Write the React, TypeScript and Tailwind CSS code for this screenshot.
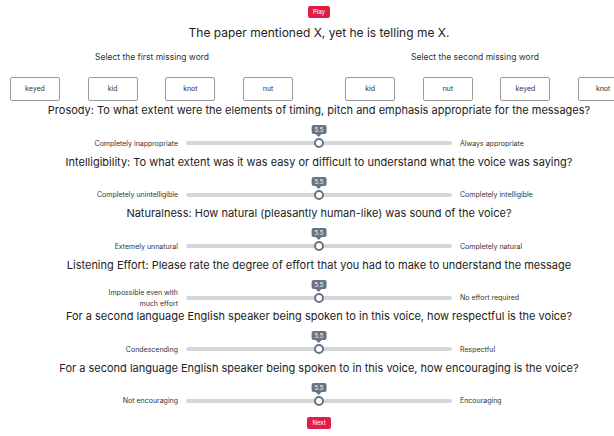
import React from "react";

const font = { fontFamily: "Inter, 'Noto Sans', sans-serif" };

type Q = { q: string; left: string; right: string };

const questions: Q[] = [
  {
    q: "Prosody: To what extent were the elements of timing, pitch and emphasis appropriate for the messages?",
    left: "Completely inappropriate",
    right: "Always appropriate",
  },
  {
    q: "Intelligibility: To what extent was it was easy or difficult to understand what the voice was saying?",
    left: "Completely unintelligible",
    right: "Completely intelligible",
  },
  {
    q: "Naturalness: How natural (pleasantly human-like) was sound of the voice?",
    left: "Extemely unnatural",
    right: "Completely natural",
  },
  {
    q: "Listening Effort: Please rate the degree of effort that you had to make to understand the message",
    left: "Impossible even with much effort",
    right: "No effort required",
  },
  {
    q: "For a second language English speaker being spoken to in this voice, how respectful is the voice?",
    left: "Condescending",
    right: "Respectful",
  },
  {
    q: "For a second language English speaker being spoken to in this voice, how encouraging is the voice?",
    left: "Not encouraging",
    right: "Encouraging",
  },
];

function WordButton({ w }: { w: string }) {
  return (
    <div className="w-[50px] h-[24px] shrink-0 border border-[#9a9a9a] rounded-[2px] flex items-center justify-center text-[7px] text-[#333] bg-white">
      {w}
    </div>
  );
}

function Slider({ left, right }: { left: string; right: string }) {
  return (
    <div className="flex items-center justify-center h-[12px]">
      <div className="w-[86px] text-right text-[7px] leading-[11px] text-[#333]">{left}</div>
      <div className="relative w-[266px] h-[10px] mx-[8px] flex items-center">
        <div className="w-full h-[4px] rounded-full bg-[#d4d6da]" />
        <div className="absolute left-1/2 -translate-x-1/2 top-0 w-[10px] h-[10px] rounded-full bg-white border-[2px] border-[#6b7280]" />
        <div className="absolute left-1/2 -translate-x-1/2 top-[-13px] flex flex-col items-center">
          <div className="bg-[#6b7280] text-white text-[6px] leading-[9px] px-[3px] rounded-[2px]">5.5</div>
          <div className="w-0 h-0 border-l-[3px] border-r-[3px] border-t-[3px] border-l-transparent border-r-transparent border-t-[#6b7280]" />
        </div>
      </div>
      <div className="w-[86px] text-left text-[7px] leading-[11px] text-[#333]">{right}</div>
    </div>
  );
}

export default function App() {
  return (
    <div className="w-[638px] bg-white text-[#222] flex flex-col items-center" style={font}>
      <div className="mt-[6px] bg-[#e11d48] text-white text-[6px] leading-[12px] px-[5px] rounded-[2px]">Play</div>
      <div className="mt-[7px] text-[12px] leading-[16px]">The paper mentioned X, yet he is telling me X.</div>
      <div className="w-full flex mt-[10px]">
        <div className="w-[304px] shrink-0 text-center text-[8.5px] leading-[12px] text-[#333]">Select the first missing word</div>
        <div className="w-[342px] shrink-0 text-center text-[8.5px] leading-[12px] text-[#333]">Select the second missing word</div>
      </div>
      <div className="w-full flex pl-[10px] mt-[14px]">
        <div className="flex gap-[27.7px]">
          {["keyed", "kid", "knot", "nut"].map((w) => (
            <WordButton key={w} w={w} />
          ))}
        </div>
        <div className="flex gap-[27.7px] ml-[52px]">
          {["kid", "nut", "keyed", "knot"].map((w) => (
            <WordButton key={w} w={w} />
          ))}
        </div>
      </div>
      <div className="flex flex-col items-center mt-[1px]">
        {questions.map((q, i) => (
          <div key={i} className="flex flex-col items-center">
            <div className="text-[11px] leading-[16px] text-[#222] whitespace-nowrap">{q.q}</div>
            <div className="mt-[19px] mb-[4.5px]">
              <Slider left={q.left} right={q.right} />
            </div>
          </div>
        ))}
      </div>
      <div className="mt-[6px] bg-[#e11d48] text-white text-[6px] leading-[12px] px-[5px] rounded-[2px]">Next</div>
    </div>
  );
}
